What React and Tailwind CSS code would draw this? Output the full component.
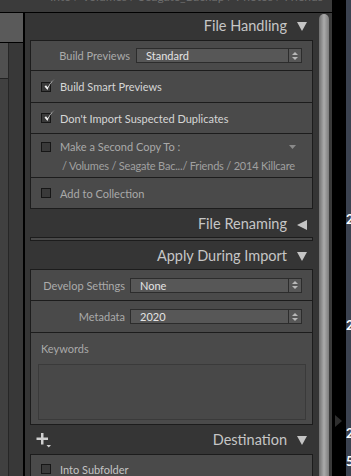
import React from "react";

const font = { fontFamily: "Lato, 'Open Sans', sans-serif" };

function Check({ checked }) {
  return (
    <div className="relative w-[10px] h-[10px] shrink-0 bg-[#3a3a3a] border border-[#161616]">
      {checked && (
        <svg className="absolute left-[1px] top-[-5px]" width="13" height="14" viewBox="0 0 13 14">
          <path d="M1.5 8.5 L4.5 12 Q7 5 12 0.8 Q7 4 4.6 9.2 L3 7.2 Z" fill="#f2f2f2" />
        </svg>
      )}
    </div>
  );
}

function Tri({ dir = "down", className = "" }) {
  if (dir === "left")
    return (
      <svg className={className} width="10" height="10" viewBox="0 0 10 10">
        <path d="M0 5 L10 0 L10 10 Z" fill="#c4c4c4" />
      </svg>
    );
  return (
    <svg className={className} width="10" height="9" viewBox="0 0 10 9">
      <path d="M0 0 L10 0 L5 9 Z" fill="#c4c4c4" />
    </svg>
  );
}

function Header({ title, dir = "down", h, plus = false, pt = "" }) {
  return (
    <div className={`shrink-0 flex items-center ${h} ${pt} pr-[6px]`}>
      {plus && (
        <div className="relative ml-[6px] w-[16px] h-[15px]">
          <svg width="16" height="15" viewBox="0 0 16 15">
            <path d="M5 0 H7.5 V4.5 H12 V7 H7.5 V11.5 H5 V7 H0.5 V4.5 H5 Z" fill="#d0d0d0" />
            <path d="M10.5 12 H15 L12.75 14.5 Z" fill="#d0d0d0" />
          </svg>
        </div>
      )}
      <div className="flex-1" />
      <span className="text-[14.5px] text-[#c6c6c6] leading-none" style={font}>{title}</span>
      <Tri dir={dir} className="ml-[10px]" />
    </div>
  );
}

function Select({ value, pl }) {
  return (
    <div className="flex-1 flex h-[15px] mr-[10px] bg-[#575757] border border-[#2c2c2c]">
      <div className={`flex-1 flex items-center ${pl} text-[11px] text-[#e4e4e4] leading-none`} style={font}>
        {value}
      </div>
      <div className="w-[13px] border-l border-[#2c2c2c] flex flex-col items-center justify-center gap-[2px]">
        <svg width="6" height="3" viewBox="0 0 6 3"><path d="M0 3 L3 0 L6 3 Z" fill="#b8b8b8" /></svg>
        <svg width="6" height="3" viewBox="0 0 6 3"><path d="M0 0 L6 0 L3 3 Z" fill="#b8b8b8" /></svg>
      </div>
    </div>
  );
}

function CheckRow({ label, checked, h = "h-[30px]", color }) {
  return (
    <div className={`shrink-0 flex items-center ${h} pl-[10px] gap-[9px] bg-[#4a4a4a]`}>
      <Check checked={checked} />
      <span className={`text-[11px] leading-none ${color}`} style={font}>{label}</span>
    </div>
  );
}

export default function App() {
  return (
    <div className="w-[351px] h-[476px] overflow-hidden bg-black flex" style={font}>
      <div className="w-[332px] flex flex-col">
        <div className="shrink-0 h-[12px] bg-[#3b3b3b] overflow-hidden relative">
          <div className="absolute left-[50px] top-[-12px] text-[12px] text-[#6c6c6c] whitespace-nowrap" style={font}>
            Into / Volumes / Seagate_Backup / Photos / Friends
          </div>
        </div>
        <div className="shrink-0 h-[1px] bg-black" />
        <div className="flex-1 flex min-h-0">
          {/* left column */}
          <div className="w-[23px] flex flex-col">
            <div className="shrink-0 h-[29px] bg-[#5a5a5a]" />
            <div className="shrink-0 h-[1px] bg-black" />
            <div className="flex-1 flex">
              <div className="w-[8px] flex flex-col">
                <div className="shrink-0 h-[35px] bg-[#505050]" />
                <div className="shrink-0 h-[1px] bg-[#222]" />
                <div className="flex-1 bg-[#404040]" />
              </div>
              <div className="w-[1px] bg-[#262626]" />
              <div className="flex-1 bg-[#383838]" />
            </div>
          </div>
          <div className="w-[2px] bg-black" />
          {/* main panel */}
          <div className="w-[293px] bg-[#353535] flex flex-col px-[5px] overflow-hidden">
            <Header title="File Handling" h="h-[27px]" />
            <div className="shrink-0 border border-[#1c1c1c] flex flex-col gap-[1px] bg-[#1c1c1c]">
              <div className="shrink-0 flex items-center h-[29px] bg-[#4a4a4a]">
                <div className="w-[99px] text-right text-[11px] text-[#ababab] leading-none" style={font}>Build Previews</div>
                <div className="w-[6px]" />
                <Select value="Standard" pl="pl-[9px]" />
              </div>
              <CheckRow label="Build Smart Previews" checked h="h-[31px]" color="text-[#d6d6d6]" />
              <CheckRow label="Don't Import Suspected Duplicates" checked h="h-[30px]" color="text-[#d6d6d6]" />
              <div className="shrink-0 h-[43px] bg-[#4a4a4a] flex flex-col pl-[10px] pr-[16px] pt-[7px]">
                <div className="flex items-center gap-[9px]">
                  <Check />
                  <span className="flex-1 text-[11px] leading-none text-[#a9a9a9]" style={font}>Make a Second Copy To :</span>
                  <svg width="7" height="4" viewBox="0 0 7 4"><path d="M0 0 L7 0 L3.5 4 Z" fill="#8a8a8a" /></svg>
                </div>
                <div className="mt-[8px] pl-[21px] text-[11px] tracking-[-0.2px] leading-none text-[#a0a0a0] whitespace-nowrap" style={font}>
                  / Volumes / Seagate Bac.../ Friends / 2014 Killcare
                </div>
              </div>
              <CheckRow label="Add to Collection" h="h-[30px]" color="text-[#a9a9a9]" />
            </div>
            <Header title="File Renaming" dir="left" h="h-[28px]" pt="pt-[3px]" />
            <div className="shrink-0 h-[4px] border border-[#1c1c1c] bg-[#4a4a4a]" />
            <Header title="Apply During Import" h="h-[28px]" pt="pt-[3px]" />
            <div className="shrink-0 border border-[#1c1c1c] flex flex-col gap-[1px] bg-[#1c1c1c]">
              <div className="shrink-0 flex items-center h-[30px] bg-[#4a4a4a]">
                <div className="w-[94px] text-right text-[11px] text-[#ababab] leading-none" style={font}>Develop Settings</div>
                <div className="w-[5px]" />
                <Select value="None" pl="pl-[9px]" />
              </div>
              <div className="shrink-0 flex items-center h-[31px] bg-[#4a4a4a]">
                <div className="w-[94px] text-right text-[11px] text-[#ababab] leading-none" style={font}>Metadata</div>
                <div className="w-[5px]" />
                <Select value="2020" pl="pl-[9px]" />
              </div>
              <div className="shrink-0 h-[91px] bg-[#4a4a4a] flex flex-col pt-[10px] pb-[4px] pl-[7px] pr-[6px]">
                <div className="pl-[3px] text-[11px] leading-none text-[#a9a9a9]" style={font}>Keywords</div>
                <div className="mt-[10px] flex-1 border border-[#3a3a3a] bg-[#484848]" />
              </div>
            </div>
            <Header title="Destination" h="h-[29px]" pt="pt-[2px]" plus />
            <div className="shrink-0 border border-[#1c1c1c] flex flex-col bg-[#1c1c1c]">
              <CheckRow label="Into Subfolder" h="h-[28px]" color="text-[#c4c4c4]" />
            </div>
          </div>
          {/* scrollbar */}
          <div className="w-[11px] bg-[#353535] pt-[1px] pl-[1px]">
            <div className="h-full w-[10px] rounded-t-[5px] bg-gradient-to-r from-[#707070] via-[#ababab] to-[#7c7c7c]" />
          </div>
          <div className="w-[3px] bg-[#3a3a3a]" />
        </div>
      </div>
      <div className="w-[14px] bg-black relative">
        <svg className="absolute left-[3px] top-[415px]" width="7" height="12" viewBox="0 0 7 12">
          <path d="M0 0 L7 6 L0 12 Z" fill="#2e2e2e" />
        </svg>
      </div>
      <div className="flex-1 bg-[#3b4250] relative overflow-hidden">
        <span className="absolute left-[0px] top-[213px] text-[13px] font-bold text-white leading-none" style={font}>2</span>
        <span className="absolute left-[0px] top-[319px] text-[13px] font-bold text-white leading-none" style={font}>2</span>
        <span className="absolute left-[0px] top-[427px] text-[13px] font-bold text-white leading-none" style={font}>2</span>
        <span className="absolute left-[0px] top-[455px] text-[13px] font-bold text-white leading-none" style={font}>5</span>
      </div>
    </div>
  );
}
